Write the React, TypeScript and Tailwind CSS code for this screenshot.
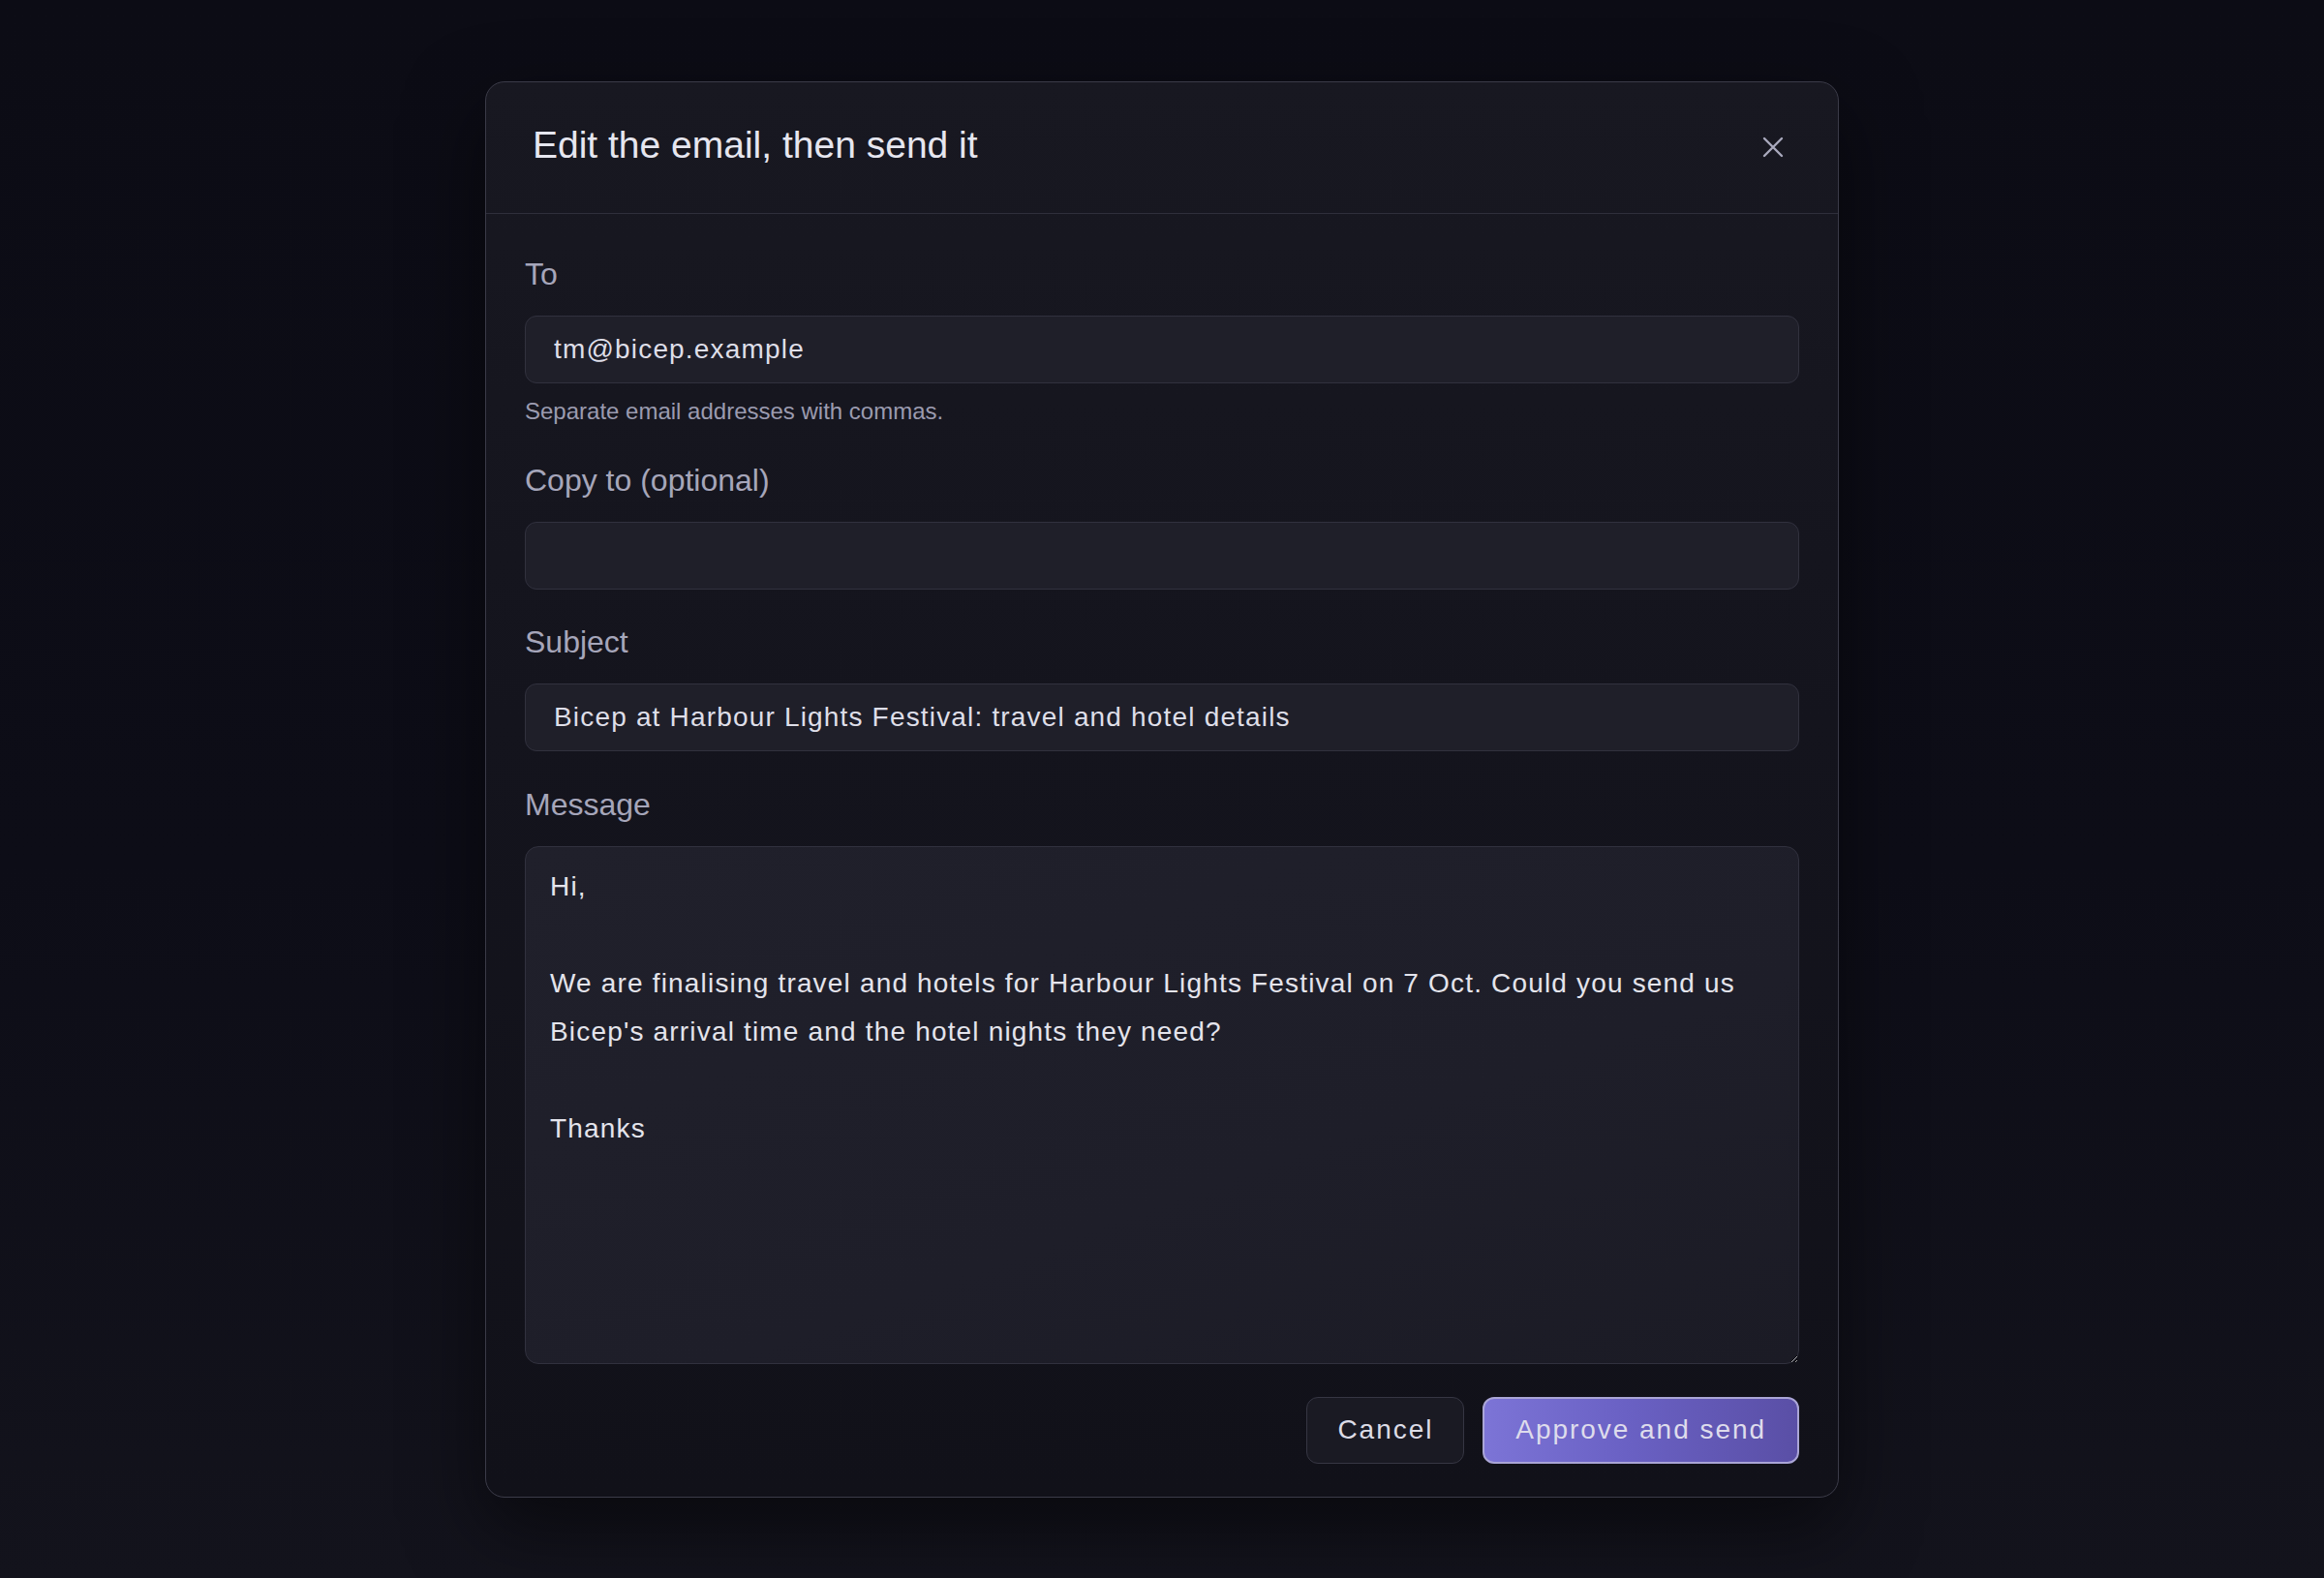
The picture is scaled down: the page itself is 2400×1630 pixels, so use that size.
import { useState } from "react";

const font = "font-['Liberation_Sans',Arial,sans-serif]";

const initialBody =
  "Hi,\n\nWe are finalising travel and hotels for Harbour Lights Festival on 7 Oct. Could you send us Bicep's arrival time and the hotel nights they need?\n\nThanks";

function Label({ children }: { children: React.ReactNode }) {
  return (
    <label className="block h-[46px] leading-[46px] text-[32px] text-[#a6a6ba] mb-[20px]">
      {children}
    </label>
  );
}

const inputCls =
  "block w-full h-[70px] rounded-[12px] border border-[#31313e] bg-[#1f1f29] px-[29px] text-[28px] tracking-[0.042em] text-[#dedee8] outline-none focus:border-[#6f66c8]";

export default function App() {
  const [to, setTo] = useState("tm@bicep.example");
  const [cc, setCc] = useState("");
  const [subject, setSubject] = useState(
    "Bicep at Harbour Lights Festival: travel and hotel details"
  );
  const [body, setBody] = useState(initialBody);

  return (
    <div
      className={`${font} min-h-[1630px] w-full flex items-center justify-center bg-[linear-gradient(180deg,#0c0c15_0%,#0d0d17_55%,#13131c_100%)] [color-scheme:dark]`}
    >
      <div className="w-[1398px] rounded-[20px] border border-[#3b3b48] bg-[linear-gradient(180deg,#181821_0%,#14141d_45%,#111119_100%)] shadow-[0_30px_80px_rgba(0,0,0,0.5)]">
        {/* header */}
        <div className="h-[136px] flex items-center justify-between pl-[31px] pr-[46px] border-b border-[#2f2f3b]">
          <h2 className="text-[39px] text-[#e6e6ef] pl-[17px] -mt-[4px]">
            Edit the email, then send it
          </h2>
          <button className="w-[42px] h-[42px] flex items-center justify-center text-[#a9a9bd] -mt-[1px]">
            <svg width="22" height="22" viewBox="0 0 22 22" fill="none">
              <path
                d="M2 2 20 20M20 2 2 20"
                stroke="currentColor"
                strokeWidth="2.4"
                strokeLinecap="round"
              />
            </svg>
          </button>
        </div>

        {/* body */}
        <div className="px-[40px] pt-[39px] pb-[34px]">
          <Label>To</Label>
          <input className={inputCls} value={to} onChange={(e) => setTo(e.target.value)} />
          <p className="mt-[14px] h-[30px] leading-[30px] text-[24px] text-[#9b9baf]">
            Separate email addresses with commas.
          </p>

          <div className="mt-[33px]">
            <Label>Copy to (optional)</Label>
            <input className={inputCls} value={cc} onChange={(e) => setCc(e.target.value)} />
          </div>

          <div className="mt-[31px]">
            <Label>Subject</Label>
            <input
              className={inputCls}
              value={subject}
              onChange={(e) => setSubject(e.target.value)}
            />
          </div>

          <div className="mt-[32px]">
            <Label>Message</Label>
            <textarea
              className="block w-full h-[535px] rounded-[14px] border border-[#31313e] bg-[linear-gradient(160deg,#20202b_0%,#1e1e29_60%,#1b1b25_100%)] px-[25px] pt-[16px] text-[28px] leading-[50px] tracking-[0.042em] text-[#e4e4ec] outline-none focus:border-[#6f66c8]"
              value={body}
              onChange={(e) => setBody(e.target.value)}
            />
          </div>

          <div className="mt-[34px] flex justify-end gap-[19px]">
            <button className="h-[69px] px-[31px] rounded-[12px] border border-[#363643] bg-[#1a1a23] text-[28px] tracking-[0.07em] text-[#dcdce6]">
              Cancel
            </button>
            <button className="h-[69px] px-[32px] rounded-[12px] border-2 border-[#aaa5d6] bg-[linear-gradient(90deg,#7c74d6_0%,#6a61c4_45%,#5a4fa6_100%)] text-[28px] tracking-[0.07em] text-[#dedcec]">
              Approve and send
            </button>
          </div>
        </div>
      </div>
    </div>
  );
}
